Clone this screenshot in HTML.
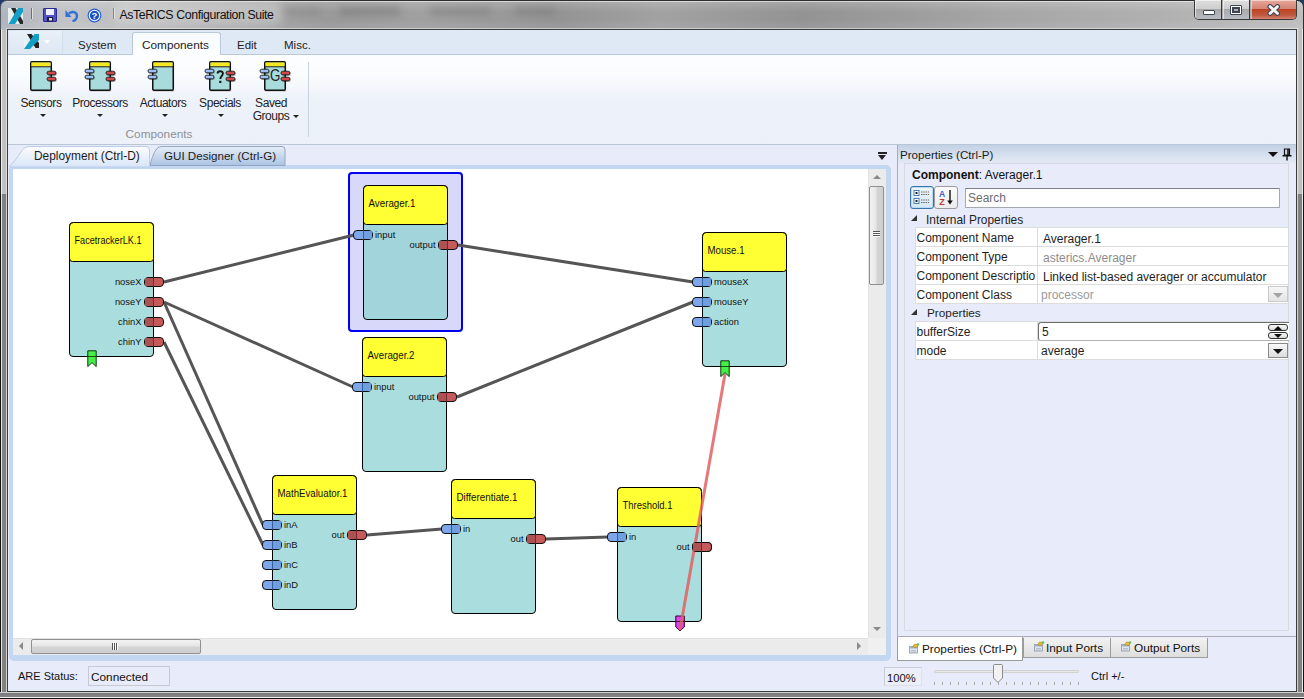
<!DOCTYPE html>
<html><head><meta charset="utf-8">
<style>
*{margin:0;padding:0;box-sizing:border-box}
html,body{width:1304px;height:699px;overflow:hidden;background:#1d3a68}
body{position:relative;font-family:"Liberation Sans",sans-serif;font-size:12px;color:#1e1e1e}
.a{position:absolute}
.t{position:absolute;white-space:nowrap;line-height:1}
#frame{left:0;top:0;width:1304px;height:699px;border-radius:7px 7px 0 0;
 background:linear-gradient(90deg,#bdbdbd 0px,#c6c6c6 60px,#ababab 220px,#999 330px,#a0a0a0 420px,#949494 560px,#a2a2a2 660px,#939393 800px,#a6a6a6 1000px,#b0b0b0 1150px,#bebebe 1304px);
 border:1px solid #2e2e2e}
#content{left:7px;top:29px;width:1290px;height:663px;border:1px solid #3c3c3c;background:#e8ebf9}
.tab{position:absolute;top:38px;font-size:12px;color:#222}
.rl{position:absolute;font-size:12px;color:#222;text-align:center;white-space:nowrap;line-height:13px}
.dd{position:absolute;width:0;height:0;border-left:2.5px solid transparent;border-right:2.5px solid transparent;border-top:3px solid #222}
.grid{position:absolute;left:915px;width:373px;background:#fff}
.row{position:absolute;left:0;width:373px;height:19px;border-bottom:1px solid #dcdcdc}
.row .k{position:absolute;left:0.5px;top:3px;font-size:12px;color:#1e1e1e;white-space:nowrap;overflow:hidden;width:118px}
.row .v{position:absolute;left:127px;top:4px;font-size:12px;color:#1e1e1e;white-space:nowrap}
.row .sep{position:absolute;left:121px;top:0;width:1px;height:19px;background:#dcdcdc}
</style></head><body>
<div id="frame" class="a"></div>
<div class="a" style="left:0;top:194px;width:7px;height:505px;background:linear-gradient(90deg,#111 0,#111 1px,#e4e4e4 1px,#e4e4e4 2px,#828282 2px,#808080 6px,#d2d2d2 6px)"></div>
<div class="a" style="left:0;top:29px;width:7px;height:165px;background:linear-gradient(90deg,#222 0,#222 1px,#ececec 1px,#ececec 2px,#c4c4c4 2px,#bdbdbd 6px,#e0e0e0 6px)"></div>
<div class="a" style="left:1297px;top:194px;width:7px;height:505px;background:linear-gradient(90deg,#cfcfcf 0,#cfcfcf 1px,#828282 1px,#808080 5px,#ececec 5px,#ececec 6px,#111 6px)"></div>
<div class="a" style="left:1297px;top:29px;width:7px;height:165px;background:linear-gradient(90deg,#e0e0e0 0,#e0e0e0 1px,#c4c4c4 1px,#bdbdbd 5px,#ececec 5px,#ececec 6px,#222 6px)"></div>
<div class="a" style="left:0;top:692px;width:1304px;height:7px;background:linear-gradient(180deg,#d0d0d0 0,#d0d0d0 1px,#7a7a7a 1px,#868686 5px,#efefef 5px,#efefef 6px,#111 6px)"></div>

<!-- title bar -->
<!-- glass highlights -->
<div class="a" style="left:6px;top:1px;width:1292px;height:1px;background:rgba(255,255,255,0.55)"></div>
<div class="a" style="left:6px;top:28px;width:1292px;height:1px;background:rgba(255,255,255,0.45)"></div>
<div class="a" style="left:1px;top:1px;width:1302px;height:28px;border-radius:6px 6px 0 0;background:linear-gradient(180deg,rgba(255,255,255,0.18),rgba(255,255,255,0) 40%,rgba(0,0,0,0) 70%,rgba(255,255,255,0.08))"></div>
<div class="a" style="left:0;top:0;width:160px;height:30px;border-radius:7px 0 0 0;background:linear-gradient(90deg,rgba(150,165,190,0.35),rgba(190,195,205,0.2) 50%,rgba(0,0,0,0))"></div>
<div class="a" style="left:280px;top:6px;width:40px;height:10px;background:#777;opacity:.25;filter:blur(3px)"></div>
<div class="a" style="left:340px;top:6px;width:60px;height:10px;background:#666;opacity:.3;filter:blur(3px)"></div>
<div class="a" style="left:430px;top:6px;width:60px;height:10px;background:#666;opacity:.25;filter:blur(3px)"></div>
<div class="a" style="left:515px;top:6px;width:40px;height:10px;background:#666;opacity:.25;filter:blur(3px)"></div>
<!-- title icons -->
<svg class="a" style="left:8px;top:8px" width="16" height="16" viewBox="0 0 16 16">
 <rect x="0" y="0" width="15" height="16" fill="#e9eef0"/>
 <path d="M3,0 H7.5 L15,13 V16 H12 L3,0Z" fill="#2a2a2a"/>
 <path d="M10,0 H15 V4 L7,16 H0.5 Z" fill="#139fc8"/>
</svg>
<div class="a" style="left:31px;top:8px;width:2px;height:11px;background:linear-gradient(90deg,#6e6e6e 50%,#e0e0e0 50%)"></div>
<svg class="a" style="left:43px;top:8px" width="14" height="14" viewBox="0 0 14 14">
 <rect x="0.5" y="0.5" width="13" height="13" rx="0.5" fill="#5050c8" stroke="#2a2a90"/>
 <rect x="3" y="1" width="8" height="6" fill="#f0f0f8"/>
 <rect x="4" y="9" width="6" height="4.5" fill="#1a1a3a"/>
 <rect x="6" y="10" width="3" height="2.5" fill="#e8e8f0"/>
</svg>
<svg class="a" style="left:65px;top:9px" width="14" height="13" viewBox="0 0 14 13">
 <path d="M4,4.5 C7,2 12,2.5 12,7 C12,10 9.5,12 7.5,12" fill="none" stroke="#3070d8" stroke-width="2.4"/>
 <path d="M0.5,1 L0.5,8 L6.5,8 Z" fill="#3070d8"/>
</svg>
<svg class="a" style="left:87px;top:8px" width="15" height="15" viewBox="0 0 15 15">
 <circle cx="7.5" cy="7.5" r="6.9" fill="#2a5ed8"/>
 <circle cx="7.5" cy="7.5" r="5.2" fill="#1650c8" stroke="#fff" stroke-width="1.1"/>
 <text x="7.5" y="11.3" font-size="9.5" font-weight="bold" text-anchor="middle" fill="#fff" font-family="Liberation Sans">?</text>
</svg>
<div class="a" style="left:113px;top:8px;width:2px;height:11px;background:linear-gradient(90deg,#6e6e6e 50%,#e0e0e0 50%)"></div>
<!-- caption buttons -->
<div class="a" style="left:1194px;top:0;width:103px;height:20px;border:1px solid #3a3a3a;border-top:none;border-radius:0 0 5px 5px;overflow:hidden;background:#aaa">
 <div class="a" style="left:0;top:0;width:27px;height:19px;background:linear-gradient(#dedede,#cfcfcf 45%,#a9a9a9 50%,#b8bcc4);border-right:1px solid #3a3a3a;box-shadow:inset 1px 1px 0 rgba(255,255,255,.6)"></div>
 <div class="a" style="left:28px;top:0;width:27px;height:19px;background:linear-gradient(#dedede,#cfcfcf 45%,#a9a9a9 50%,#b8bcc4);border-right:1px solid #3a3a3a;box-shadow:inset 1px 1px 0 rgba(255,255,255,.6)"></div>
 <div class="a" style="left:56px;top:0;width:46px;height:19px;background:linear-gradient(#e8a89c,#d48474 45%,#c04424 50%,#bf5a42 80%,#d9826e);box-shadow:inset 1px 1px 0 rgba(255,255,255,.5),inset -1px 0 0 rgba(255,255,255,.3)"></div>
</div>
<div class="a" style="left:1203px;top:10px;width:12px;height:5px;background:#fff;border:1px solid #3d4454;border-radius:1px"></div>
<div class="a" style="left:1230px;top:5px;width:12px;height:10px;background:transparent;border:1px solid #3d4454;border-radius:1px;box-shadow:inset 0 0 0 1px #fff, inset 0 0 0 3px #3d4454"></div>
<svg class="a" style="left:1266px;top:4px" width="16" height="12" viewBox="0 0 16 12">
 <path d="M4,2.6 L11.5,9.4 M11.5,2.6 L4,9.4" stroke="#3d4454" stroke-width="5" stroke-linecap="round"/>
 <path d="M4,2.6 L11.5,9.4 M11.5,2.6 L4,9.4" stroke="#f4f4f4" stroke-width="2.8" stroke-linecap="round"/>
</svg>

<div class="a" style="left:112px;top:3px;width:172px;height:22px;border-radius:11px;background:rgba(235,235,235,0.35);filter:blur(4px)"></div>
<div class="t" style="left:119.5px;top:8.5px;font-size:12.3px;letter-spacing:-0.38px;color:#111">AsTeRICS Configuration Suite</div>

<div id="content" class="a"></div>
<!-- ribbon tab row -->
<div class="a" style="left:8px;top:30px;width:1288px;height:25px;background:#dfe9f5;border-bottom:1px solid #b9c9dd"></div>
<!-- ribbon panel -->
<div class="a" style="left:8px;top:55px;width:1288px;height:90px;background:linear-gradient(#fdfeff 0,#fbfcfe 20px,#eef3fa 42px,#ebf0f9 100%);border-bottom:1px solid #b8c6d8"></div>

<!-- app button -->
<div class="a" style="left:9px;top:31px;width:54px;height:22px;background:linear-gradient(#e9f0f9,#dde7f3);border-right:1px solid #d3deeb"></div>
<svg class="a" style="left:0;top:0" width="64" height="56" viewBox="0 0 64 56">
 <path d="M24,39 L29,44 L24,49Z" fill="#eef2f5"/>
 <path d="M27,34 H31.5 L39,43 V48 H35.5 Z" fill="#222"/>
 <path d="M34.5,34 H39 V40 L30,49 H24 Z" fill="#139ec8"/>
</svg>
<div class="dd" style="left:43.5px;top:40px;border-top-color:#fbfcfe;border-left-width:3.5px;border-right-width:3.5px;border-top-width:4px"></div>
<!-- tabs -->
<div class="t tab" style="left:78px;top:39.5px;font-size:11.5px">System</div>
<div class="a" style="left:132px;top:32px;width:89px;height:23px;border:1px solid #b9c8da;border-bottom:none;border-radius:3px 3px 0 0;background:linear-gradient(#f7fafd,#fdfeff)"></div>
<div class="t tab" style="left:142px;top:39.5px;font-size:11.8px">Components</div>
<div class="t tab" style="left:237px;top:39.5px;font-size:11.5px">Edit</div>
<div class="t tab" style="left:284px;top:39.5px;font-size:11.5px">Misc.</div>
<!-- ribbon icons -->
<svg class="a" style="left:0;top:55px" width="320" height="45" viewBox="0 55 320 45">
 
 <g transform="translate(30,61)">
   <rect x="1.2" y="1.5" width="21" height="29" rx="1" fill="#000" opacity="0.22"/>
   <rect x="0.75" y="0.75" width="20.5" height="28.5" rx="1.2" fill="#a8dcdc" stroke="#111" stroke-width="1.5"/>
   <path d="M1.5,5.5 V1.5 H20.5 V5.5Z" fill="#f8e81e"/>
   <line x1="1" y1="5.8" x2="21" y2="5.8" stroke="#222" stroke-width="1"/>
  </g>
 <g transform="translate(47,71.2)">
   <rect x="0.8" y="0.8" width="9" height="4" rx="2" fill="#000" opacity=".3"/>
   <rect x="0" y="0" width="9" height="3.6" rx="1.8" fill="#cf4a48" stroke="#1a1a1a" stroke-width="0.9"/>
  </g><g transform="translate(47,77.2)">
   <rect x="0.8" y="0.8" width="9" height="4" rx="2" fill="#000" opacity=".3"/>
   <rect x="0" y="0" width="9" height="3.6" rx="1.8" fill="#cf4a48" stroke="#1a1a1a" stroke-width="0.9"/>
  </g>
 <g transform="translate(89,61)">
   <rect x="1.2" y="1.5" width="21" height="29" rx="1" fill="#000" opacity="0.22"/>
   <rect x="0.75" y="0.75" width="20.5" height="28.5" rx="1.2" fill="#a8dcdc" stroke="#111" stroke-width="1.5"/>
   <path d="M1.5,5.5 V1.5 H20.5 V5.5Z" fill="#f8e81e"/>
   <line x1="1" y1="5.8" x2="21" y2="5.8" stroke="#222" stroke-width="1"/>
  </g>
 <g transform="translate(85,69.2)">
   <rect x="0.8" y="0.8" width="9" height="4" rx="2" fill="#000" opacity=".3"/>
   <rect x="0" y="0" width="9" height="3.6" rx="1.8" fill="#9ec0f4" stroke="#1a1a1a" stroke-width="0.9"/>
  </g><g transform="translate(85,75.2)">
   <rect x="0.8" y="0.8" width="9" height="4" rx="2" fill="#000" opacity=".3"/>
   <rect x="0" y="0" width="9" height="3.6" rx="1.8" fill="#9ec0f4" stroke="#1a1a1a" stroke-width="0.9"/>
  </g>
 <g transform="translate(106,71.2)">
   <rect x="0.8" y="0.8" width="9" height="4" rx="2" fill="#000" opacity=".3"/>
   <rect x="0" y="0" width="9" height="3.6" rx="1.8" fill="#cf4a48" stroke="#1a1a1a" stroke-width="0.9"/>
  </g><g transform="translate(106,77.2)">
   <rect x="0.8" y="0.8" width="9" height="4" rx="2" fill="#000" opacity=".3"/>
   <rect x="0" y="0" width="9" height="3.6" rx="1.8" fill="#cf4a48" stroke="#1a1a1a" stroke-width="0.9"/>
  </g>
 <g transform="translate(152,61)">
   <rect x="1.2" y="1.5" width="21" height="29" rx="1" fill="#000" opacity="0.22"/>
   <rect x="0.75" y="0.75" width="20.5" height="28.5" rx="1.2" fill="#a8dcdc" stroke="#111" stroke-width="1.5"/>
   <path d="M1.5,5.5 V1.5 H20.5 V5.5Z" fill="#f8e81e"/>
   <line x1="1" y1="5.8" x2="21" y2="5.8" stroke="#222" stroke-width="1"/>
  </g>
 <g transform="translate(148,69.2)">
   <rect x="0.8" y="0.8" width="9" height="4" rx="2" fill="#000" opacity=".3"/>
   <rect x="0" y="0" width="9" height="3.6" rx="1.8" fill="#9ec0f4" stroke="#1a1a1a" stroke-width="0.9"/>
  </g><g transform="translate(148,75.2)">
   <rect x="0.8" y="0.8" width="9" height="4" rx="2" fill="#000" opacity=".3"/>
   <rect x="0" y="0" width="9" height="3.6" rx="1.8" fill="#9ec0f4" stroke="#1a1a1a" stroke-width="0.9"/>
  </g>
 <g transform="translate(209,61)">
   <rect x="1.2" y="1.5" width="21" height="29" rx="1" fill="#000" opacity="0.22"/>
   <rect x="0.75" y="0.75" width="20.5" height="28.5" rx="1.2" fill="#a8dcdc" stroke="#111" stroke-width="1.5"/>
   <path d="M1.5,5.5 V1.5 H20.5 V5.5Z" fill="#f8e81e"/>
   <line x1="1" y1="5.8" x2="21" y2="5.8" stroke="#222" stroke-width="1"/>
  </g>
 <g transform="translate(205,69.2)">
   <rect x="0.8" y="0.8" width="9" height="4" rx="2" fill="#000" opacity=".3"/>
   <rect x="0" y="0" width="9" height="3.6" rx="1.8" fill="#9ec0f4" stroke="#1a1a1a" stroke-width="0.9"/>
  </g><g transform="translate(205,75.2)">
   <rect x="0.8" y="0.8" width="9" height="4" rx="2" fill="#000" opacity=".3"/>
   <rect x="0" y="0" width="9" height="3.6" rx="1.8" fill="#9ec0f4" stroke="#1a1a1a" stroke-width="0.9"/>
  </g>
 <g transform="translate(226,71.2)">
   <rect x="0.8" y="0.8" width="9" height="4" rx="2" fill="#000" opacity=".3"/>
   <rect x="0" y="0" width="9" height="3.6" rx="1.8" fill="#cf4a48" stroke="#1a1a1a" stroke-width="0.9"/>
  </g><g transform="translate(226,77.2)">
   <rect x="0.8" y="0.8" width="9" height="4" rx="2" fill="#000" opacity=".3"/>
   <rect x="0" y="0" width="9" height="3.6" rx="1.8" fill="#cf4a48" stroke="#1a1a1a" stroke-width="0.9"/>
  </g>
 <path d="M217.6,73.6 C217.6,70.6 222.9,70.4 222.9,73.6 C222.9,76 220.3,76.2 220.3,79" fill="none" stroke="#151515" stroke-width="1.9"/><rect x="219.2" y="80.8" width="2.2" height="2.2" fill="#151515"/>
 <g transform="translate(264,61)">
   <rect x="1.2" y="1.5" width="21" height="29" rx="1" fill="#000" opacity="0.22"/>
   <rect x="0.75" y="0.75" width="20.5" height="28.5" rx="1.2" fill="#a8dcdc" stroke="#111" stroke-width="1.5"/>
   <path d="M1.5,5.5 V1.5 H20.5 V5.5Z" fill="#f8e81e"/>
   <line x1="1" y1="5.8" x2="21" y2="5.8" stroke="#222" stroke-width="1"/>
  </g>
 <g transform="translate(260,69.2)">
   <rect x="0.8" y="0.8" width="9" height="4" rx="2" fill="#000" opacity=".3"/>
   <rect x="0" y="0" width="9" height="3.6" rx="1.8" fill="#9ec0f4" stroke="#1a1a1a" stroke-width="0.9"/>
  </g><g transform="translate(260,75.2)">
   <rect x="0.8" y="0.8" width="9" height="4" rx="2" fill="#000" opacity=".3"/>
   <rect x="0" y="0" width="9" height="3.6" rx="1.8" fill="#9ec0f4" stroke="#1a1a1a" stroke-width="0.9"/>
  </g>
 <g transform="translate(281,71.2)">
   <rect x="0.8" y="0.8" width="9" height="4" rx="2" fill="#000" opacity=".3"/>
   <rect x="0" y="0" width="9" height="3.6" rx="1.8" fill="#cf4a48" stroke="#1a1a1a" stroke-width="0.9"/>
  </g><g transform="translate(281,77.2)">
   <rect x="0.8" y="0.8" width="9" height="4" rx="2" fill="#000" opacity=".3"/>
   <rect x="0" y="0" width="9" height="3.6" rx="1.8" fill="#cf4a48" stroke="#1a1a1a" stroke-width="0.9"/>
  </g>
 <text x="270" y="80.8" font-size="16" textLength="10.4" lengthAdjust="spacingAndGlyphs" fill="#222" font-family="Liberation Sans">G</text>
</svg>
<div class="rl" style="left:11px;top:96.5px;width:60px;font-size:12px;letter-spacing:-0.45px">Sensors</div>
<div class="rl" style="left:70px;top:96.5px;width:60px;font-size:12px;letter-spacing:-0.45px">Processors</div>
<div class="rl" style="left:133px;top:96.5px;width:60px;font-size:12px;letter-spacing:-0.45px">Actuators</div>
<div class="rl" style="left:190px;top:96.5px;width:60px;font-size:12px;letter-spacing:-0.45px">Specials</div>
<div class="rl" style="left:241px;top:96.5px;width:60px;font-size:12px;letter-spacing:-0.45px">Saved<br>Groups</div>
<div class="dd" style="left:39.5px;top:113.5px;border-left-width:3px;border-right-width:3px;border-top-width:3.5px"></div>
<div class="dd" style="left:97px;top:113.5px;border-left-width:3px;border-right-width:3px;border-top-width:3.5px"></div>
<div class="dd" style="left:161.5px;top:113.5px;border-left-width:3px;border-right-width:3px;border-top-width:3.5px"></div>
<div class="dd" style="left:217.5px;top:113.5px;border-left-width:3px;border-right-width:3px;border-top-width:3.5px"></div>
<div class="dd" style="left:293px;top:114.5px;border-left-width:3px;border-right-width:3px;border-top-width:3.5px"></div>
<div class="rl" style="left:119px;top:128px;width:80px;font-size:11.8px;color:#8e9196">Components</div>
<div class="a" style="left:308px;top:62px;width:1px;height:75px;background:#c9d3e0"></div>

<!-- canvas frame -->
<div class="a" style="left:9px;top:165px;width:882px;height:496px;border:4px solid #c4d7f2;border-right-width:5px;border-bottom-width:6px;border-radius:5px;background:#fff"></div>
<!-- doc tabs -->
<svg class="a" style="left:0;top:140px" width="300" height="30" viewBox="0 140 300 30">
 <defs>
  <linearGradient id="dt1" x1="0" y1="0" x2="0" y2="1"><stop offset="0" stop-color="#fbfcfe"/><stop offset="1" stop-color="#d9e6f8"/></linearGradient>
  <linearGradient id="dt2" x1="0" y1="0" x2="0" y2="1"><stop offset="0" stop-color="#e6edf7"/><stop offset="0.45" stop-color="#ccdaee"/><stop offset="1" stop-color="#abc4e3"/></linearGradient>
 </defs>
 <path d="M150,165.5 C151.5,160 153,153 157,148.5 Q158.5,146.5 162,146.5 H282 Q285,146.5 285,149.5 V165.5 Z" fill="url(#dt2)" stroke="#93a6c0" stroke-width="1"/>
 <path d="M9.5,166 C14,162 17,158 21,152 Q24,146.5 30,146.5 H146 Q149.5,146.5 149.5,150 V167 H9.5Z" fill="url(#dt1)" stroke="#b9cdea" stroke-width="1"/>
</svg>
<div class="t" style="left:34px;top:151px;font-size:11.9px;color:#1b1b1b">Deployment (Ctrl-D)</div>
<div class="t" style="left:164px;top:150px;font-size:11.6px;color:#1b1b1b">GUI Designer (Ctrl-G)</div>
<!-- doc dropdown icon -->
<div class="a" style="left:878px;top:152px;width:9px;height:2px;background:#222"></div>
<div class="dd" style="left:878px;top:155px;border-left-width:4.5px;border-right-width:4.5px;border-top-width:5px"></div>

<svg class="a" style="left:13px;top:169px" width="855" height="469" viewBox="13 169 855 469" font-family="Liberation Sans, sans-serif"><rect x="349" y="173" width="113" height="158" rx="3" fill="#d8d8fa" stroke="#0000f0" stroke-width="2"/>
<line x1="164" y1="282" x2="354" y2="235" stroke="#555555" stroke-width="3"/>
<line x1="164" y1="302" x2="353" y2="387" stroke="#555555" stroke-width="3"/>
<line x1="164" y1="302" x2="263" y2="525" stroke="#555555" stroke-width="3"/>
<line x1="164" y1="342" x2="263" y2="545" stroke="#555555" stroke-width="3"/>
<line x1="458" y1="245" x2="693" y2="282" stroke="#555555" stroke-width="3"/>
<line x1="457" y1="397" x2="693" y2="302" stroke="#555555" stroke-width="3"/>
<line x1="367" y1="535" x2="442" y2="529" stroke="#555555" stroke-width="3"/>
<line x1="546" y1="539" x2="608" y2="537" stroke="#555555" stroke-width="3"/>
<rect x="69.5" y="222.5" width="84" height="134" rx="3.5" fill="#aadede" stroke="#000"/>
<path d="M69.5,261.5 V226.5 a4,4 0 0 1 4,-4 H149.5 a4,4 0 0 1 4,4 V258.5 a3,3 0 0 1 -3,3 H72.5 a3,3 0 0 1 -3,-3 Z" fill="#ffff33" stroke="#000"/>
<text x="74.5" y="244.2" font-size="10.1" textLength="67" lengthAdjust="spacingAndGlyphs" fill="#111">FacetrackerLK.1</text>
<rect x="144.5" y="277.5" width="19" height="9" rx="3.5" fill="#c65a5a" stroke="#111"/>
<rect x="145.0" y="278" width="8.5" height="8" fill="#ad5252"/>
<line x1="153.5" y1="277.5" x2="153.5" y2="286.5" stroke="#7a2a2a" stroke-width="1"/>
<text x="141.5" y="284.8" font-size="9.4" text-anchor="end" fill="#111">noseX</text>
<rect x="144.5" y="297.5" width="19" height="9" rx="3.5" fill="#c65a5a" stroke="#111"/>
<rect x="145.0" y="298" width="8.5" height="8" fill="#ad5252"/>
<line x1="153.5" y1="297.5" x2="153.5" y2="306.5" stroke="#7a2a2a" stroke-width="1"/>
<text x="141.5" y="304.8" font-size="9.4" text-anchor="end" fill="#111">noseY</text>
<rect x="144.5" y="317.5" width="19" height="9" rx="3.5" fill="#c65a5a" stroke="#111"/>
<rect x="145.0" y="318" width="8.5" height="8" fill="#ad5252"/>
<line x1="153.5" y1="317.5" x2="153.5" y2="326.5" stroke="#7a2a2a" stroke-width="1"/>
<text x="141.5" y="324.8" font-size="9.4" text-anchor="end" fill="#111">chinX</text>
<rect x="144.5" y="337.5" width="19" height="9" rx="3.5" fill="#c65a5a" stroke="#111"/>
<rect x="145.0" y="338" width="8.5" height="8" fill="#ad5252"/>
<line x1="153.5" y1="337.5" x2="153.5" y2="346.5" stroke="#7a2a2a" stroke-width="1"/>
<text x="141.5" y="344.8" font-size="9.4" text-anchor="end" fill="#111">chinY</text>
<rect x="363.5" y="185.5" width="84" height="134" rx="3.5" fill="#a2d4dc" stroke="#000"/>
<path d="M363.5,224.5 V189.5 a4,4 0 0 1 4,-4 H443.5 a4,4 0 0 1 4,4 V221.5 a3,3 0 0 1 -3,3 H366.5 a3,3 0 0 1 -3,-3 Z" fill="#ffff33" stroke="#000"/>
<text x="368.5" y="207.2" font-size="10.1" textLength="47" lengthAdjust="spacingAndGlyphs" fill="#111">Averager.1</text>
<rect x="353.5" y="230.5" width="19" height="9" rx="3.5" fill="#7ea6ea" stroke="#111"/>
<rect x="364" y="231" width="8.0" height="8" rx="0" fill="#6e9ede" opacity="0.9"/>
<line x1="363.5" y1="230.5" x2="363.5" y2="239.5" stroke="#35609a" stroke-width="1"/>
<text x="375" y="237.8" font-size="9.4" fill="#111">input</text>
<rect x="438.5" y="240.5" width="19" height="9" rx="3.5" fill="#c65a5a" stroke="#111"/>
<rect x="439.0" y="241" width="8.5" height="8" fill="#ad5252"/>
<line x1="447.5" y1="240.5" x2="447.5" y2="249.5" stroke="#7a2a2a" stroke-width="1"/>
<text x="435.5" y="247.8" font-size="9.4" text-anchor="end" fill="#111">output</text>
<rect x="362.5" y="337.5" width="84" height="134" rx="3.5" fill="#aadede" stroke="#000"/>
<path d="M362.5,376.5 V341.5 a4,4 0 0 1 4,-4 H442.5 a4,4 0 0 1 4,4 V373.5 a3,3 0 0 1 -3,3 H365.5 a3,3 0 0 1 -3,-3 Z" fill="#ffff33" stroke="#000"/>
<text x="367.5" y="359.2" font-size="10.1" textLength="47" lengthAdjust="spacingAndGlyphs" fill="#111">Averager.2</text>
<rect x="352.5" y="382.5" width="19" height="9" rx="3.5" fill="#7ea6ea" stroke="#111"/>
<rect x="363" y="383" width="8.0" height="8" rx="0" fill="#6e9ede" opacity="0.9"/>
<line x1="362.5" y1="382.5" x2="362.5" y2="391.5" stroke="#35609a" stroke-width="1"/>
<text x="374" y="389.8" font-size="9.4" fill="#111">input</text>
<rect x="437.5" y="392.5" width="19" height="9" rx="3.5" fill="#c65a5a" stroke="#111"/>
<rect x="438.0" y="393" width="8.5" height="8" fill="#ad5252"/>
<line x1="446.5" y1="392.5" x2="446.5" y2="401.5" stroke="#7a2a2a" stroke-width="1"/>
<text x="434.5" y="399.8" font-size="9.4" text-anchor="end" fill="#111">output</text>
<rect x="702.5" y="232.5" width="84" height="134" rx="3.5" fill="#aadede" stroke="#000"/>
<path d="M702.5,271.5 V236.5 a4,4 0 0 1 4,-4 H782.5 a4,4 0 0 1 4,4 V268.5 a3,3 0 0 1 -3,3 H705.5 a3,3 0 0 1 -3,-3 Z" fill="#ffff33" stroke="#000"/>
<text x="707.5" y="254.2" font-size="10.1" textLength="37" lengthAdjust="spacingAndGlyphs" fill="#111">Mouse.1</text>
<rect x="692.5" y="277.5" width="19" height="9" rx="3.5" fill="#7ea6ea" stroke="#111"/>
<rect x="703" y="278" width="8.0" height="8" rx="0" fill="#6e9ede" opacity="0.9"/>
<line x1="702.5" y1="277.5" x2="702.5" y2="286.5" stroke="#35609a" stroke-width="1"/>
<text x="714" y="284.8" font-size="9.4" fill="#111">mouseX</text>
<rect x="692.5" y="297.5" width="19" height="9" rx="3.5" fill="#7ea6ea" stroke="#111"/>
<rect x="703" y="298" width="8.0" height="8" rx="0" fill="#6e9ede" opacity="0.9"/>
<line x1="702.5" y1="297.5" x2="702.5" y2="306.5" stroke="#35609a" stroke-width="1"/>
<text x="714" y="304.8" font-size="9.4" fill="#111">mouseY</text>
<rect x="692.5" y="317.5" width="19" height="9" rx="3.5" fill="#7ea6ea" stroke="#111"/>
<rect x="703" y="318" width="8.0" height="8" rx="0" fill="#6e9ede" opacity="0.9"/>
<line x1="702.5" y1="317.5" x2="702.5" y2="326.5" stroke="#35609a" stroke-width="1"/>
<text x="714" y="324.8" font-size="9.4" fill="#111">action</text>
<rect x="272.5" y="475.5" width="84" height="134" rx="3.5" fill="#aadede" stroke="#000"/>
<path d="M272.5,514.5 V479.5 a4,4 0 0 1 4,-4 H352.5 a4,4 0 0 1 4,4 V511.5 a3,3 0 0 1 -3,3 H275.5 a3,3 0 0 1 -3,-3 Z" fill="#ffff33" stroke="#000"/>
<text x="277.5" y="497.2" font-size="10.1" textLength="70" lengthAdjust="spacingAndGlyphs" fill="#111">MathEvaluator.1</text>
<rect x="262.5" y="520.5" width="19" height="9" rx="3.5" fill="#7ea6ea" stroke="#111"/>
<rect x="273" y="521" width="8.0" height="8" rx="0" fill="#6e9ede" opacity="0.9"/>
<line x1="272.5" y1="520.5" x2="272.5" y2="529.5" stroke="#35609a" stroke-width="1"/>
<text x="284" y="527.8" font-size="9.4" fill="#111">inA</text>
<rect x="262.5" y="540.5" width="19" height="9" rx="3.5" fill="#7ea6ea" stroke="#111"/>
<rect x="273" y="541" width="8.0" height="8" rx="0" fill="#6e9ede" opacity="0.9"/>
<line x1="272.5" y1="540.5" x2="272.5" y2="549.5" stroke="#35609a" stroke-width="1"/>
<text x="284" y="547.8" font-size="9.4" fill="#111">inB</text>
<rect x="262.5" y="560.5" width="19" height="9" rx="3.5" fill="#7ea6ea" stroke="#111"/>
<rect x="273" y="561" width="8.0" height="8" rx="0" fill="#6e9ede" opacity="0.9"/>
<line x1="272.5" y1="560.5" x2="272.5" y2="569.5" stroke="#35609a" stroke-width="1"/>
<text x="284" y="567.8" font-size="9.4" fill="#111">inC</text>
<rect x="262.5" y="580.5" width="19" height="9" rx="3.5" fill="#7ea6ea" stroke="#111"/>
<rect x="273" y="581" width="8.0" height="8" rx="0" fill="#6e9ede" opacity="0.9"/>
<line x1="272.5" y1="580.5" x2="272.5" y2="589.5" stroke="#35609a" stroke-width="1"/>
<text x="284" y="587.8" font-size="9.4" fill="#111">inD</text>
<rect x="347.5" y="530.5" width="19" height="9" rx="3.5" fill="#c65a5a" stroke="#111"/>
<rect x="348.0" y="531" width="8.5" height="8" fill="#ad5252"/>
<line x1="356.5" y1="530.5" x2="356.5" y2="539.5" stroke="#7a2a2a" stroke-width="1"/>
<text x="344.5" y="537.8" font-size="9.4" text-anchor="end" fill="#111">out</text>
<rect x="451.5" y="479.5" width="84" height="134" rx="3.5" fill="#aadede" stroke="#000"/>
<path d="M451.5,518.5 V483.5 a4,4 0 0 1 4,-4 H531.5 a4,4 0 0 1 4,4 V515.5 a3,3 0 0 1 -3,3 H454.5 a3,3 0 0 1 -3,-3 Z" fill="#ffff33" stroke="#000"/>
<text x="456.5" y="501.2" font-size="10.1" textLength="61" lengthAdjust="spacingAndGlyphs" fill="#111">Differentiate.1</text>
<rect x="441.5" y="524.5" width="19" height="9" rx="3.5" fill="#7ea6ea" stroke="#111"/>
<rect x="452" y="525" width="8.0" height="8" rx="0" fill="#6e9ede" opacity="0.9"/>
<line x1="451.5" y1="524.5" x2="451.5" y2="533.5" stroke="#35609a" stroke-width="1"/>
<text x="463" y="531.8" font-size="9.4" fill="#111">in</text>
<rect x="526.5" y="534.5" width="19" height="9" rx="3.5" fill="#c65a5a" stroke="#111"/>
<rect x="527.0" y="535" width="8.5" height="8" fill="#ad5252"/>
<line x1="535.5" y1="534.5" x2="535.5" y2="543.5" stroke="#7a2a2a" stroke-width="1"/>
<text x="523.5" y="541.8" font-size="9.4" text-anchor="end" fill="#111">out</text>
<rect x="617.5" y="487.5" width="84" height="134" rx="3.5" fill="#aadede" stroke="#000"/>
<path d="M617.5,526.5 V491.5 a4,4 0 0 1 4,-4 H697.5 a4,4 0 0 1 4,4 V523.5 a3,3 0 0 1 -3,3 H620.5 a3,3 0 0 1 -3,-3 Z" fill="#ffff33" stroke="#000"/>
<text x="622.5" y="509.2" font-size="10.1" textLength="50" lengthAdjust="spacingAndGlyphs" fill="#111">Threshold.1</text>
<rect x="607.5" y="532.5" width="19" height="9" rx="3.5" fill="#7ea6ea" stroke="#111"/>
<rect x="618" y="533" width="8.0" height="8" rx="0" fill="#6e9ede" opacity="0.9"/>
<line x1="617.5" y1="532.5" x2="617.5" y2="541.5" stroke="#35609a" stroke-width="1"/>
<text x="629" y="539.8" font-size="9.4" fill="#111">in</text>
<rect x="692.5" y="542.5" width="19" height="9" rx="3.5" fill="#c65a5a" stroke="#111"/>
<rect x="693.0" y="543" width="8.5" height="8" fill="#ad5252"/>
<line x1="701.5" y1="542.5" x2="701.5" y2="551.5" stroke="#7a2a2a" stroke-width="1"/>
<text x="689.5" y="549.8" font-size="9.4" text-anchor="end" fill="#111">out</text>
<path d="M675.8,616 H684.3 V627 L680,630.8 L675.8,627 Z" fill="#dd44ee" stroke="#330033" stroke-width="1"/>
<line x1="675.8" y1="621.5" x2="684.3" y2="621.5" stroke="#220022" stroke-opacity="0.8"/>
<line x1="680" y1="630" x2="725" y2="374" stroke="#e06262" stroke-opacity="0.85" stroke-width="3"/>
<rect x="692.5" y="542.5" width="19" height="9" rx="3.5" fill="#c65a5a" stroke="#111"/>
<rect x="693.0" y="543" width="8.5" height="8" fill="#ad5252"/>
<line x1="701.5" y1="542.5" x2="701.5" y2="551.5" stroke="#7a2a2a" stroke-width="1"/>
<path d="M87.8,350.8 H96.2 V366.6 L92,362.6 L87.8,366.6 Z" fill="#44f044" stroke="#113311" stroke-width="1"/><line x1="87.8" y1="356.5" x2="96.2" y2="356.5" stroke="#0a2a0a" stroke-opacity="0.8" stroke-width="1"/>
<path d="M720.8,360.8 H729.2 V376.6 L725,372.6 L720.8,376.6 Z" fill="#44f044" stroke="#113311" stroke-width="1"/><line x1="720.8" y1="366.5" x2="729.2" y2="366.5" stroke="#0a2a0a" stroke-opacity="0.8" stroke-width="1"/></svg>
<!-- vertical scrollbar -->
<div class="a" style="left:868px;top:169px;width:18px;height:469px;background:#ebebeb;border-left:1px solid #e2e2e2"></div>
<div class="dd" style="left:873px;top:175px;border-top:none;border-bottom:4px solid #8a8a8a;border-left-width:4px;border-right-width:4px"></div>
<div class="a" style="left:869px;top:186px;width:15px;height:99px;border:1px solid #8e8f8f;border-radius:2px;background:linear-gradient(90deg,#f3f3f3,#e6e6e6 45%,#d4d4d4 55%,#cfcfcf)"></div>
<div class="a" style="left:873px;top:231px;width:7px;height:1px;background:#555;box-shadow:0 2px 0 #555,0 4px 0 #555,0 1px 0 #fff,0 3px 0 #fff,0 5px 0 #fff"></div>
<div class="dd" style="left:873px;top:627px;border-top:4px solid #8a8a8a;border-left-width:4px;border-right-width:4px"></div>
<!-- horizontal scrollbar -->
<div class="a" style="left:13px;top:638px;width:855px;height:17px;background:#ebebeb;border-top:1px solid #e2e2e2"></div>
<div class="a" style="left:868px;top:638px;width:18px;height:17px;background:#f0f0f0"></div>
<div class="a" style="left:19px;top:642px;width:0;height:0;border-top:4px solid transparent;border-bottom:4px solid transparent;border-right:4px solid #8a8a8a"></div>
<div class="a" style="left:31px;top:639px;width:170px;height:15px;border:1px solid #8e8f8f;border-radius:2px;background:linear-gradient(#f3f3f3,#e6e6e6 45%,#d4d4d4 55%,#cfcfcf)"></div>
<div class="a" style="left:112px;top:643px;width:1px;height:7px;background:#555;box-shadow:2px 0 0 #555,4px 0 0 #555,1px 0 0 #fff,3px 0 0 #fff,5px 0 0 #fff"></div>
<div class="a" style="left:857px;top:642px;width:0;height:0;border-top:4px solid transparent;border-bottom:4px solid transparent;border-left:4px solid #8a8a8a"></div>

<!-- properties panel -->
<div class="a" style="left:897px;top:145px;width:399px;height:492px;background:#e8ebf9;border-left:1px solid #a9acb4;border-bottom:1px solid #a9acb4"></div>
<div class="a" style="left:898px;top:145px;width:398px;height:18px;background:linear-gradient(#c3d1e5,#d7e1ef 60%,#e3e9f4)"></div>
<div class="t" style="left:900px;top:149px;font-size:11.6px;color:#1b1b1b">Properties (Ctrl-P)</div>
<div class="dd" style="left:1268px;top:152px;border-left-width:5px;border-right-width:5px;border-top-width:5px;border-top-color:#111"></div>
<svg class="a" style="left:1282px;top:148px" width="10" height="13" viewBox="0 0 10 13">
 <path d="M2.5,1 H7.5 V7 H2.5Z" fill="none" stroke="#111" stroke-width="1.2"/>
 <rect x="5.2" y="1" width="1.6" height="6" fill="#111"/>
 <rect x="0.5" y="7" width="9" height="1.5" fill="#111"/>
 <rect x="4.3" y="8" width="1.4" height="4.5" fill="#111"/>
</svg>
<div class="a" style="left:904px;top:163px;width:385px;height:468px;border:1px solid #d9dbe3"></div>
<div class="t" style="left:912px;top:169px;font-size:12px;color:#111"><b>Component</b>: Averager.1</div>
<!-- category buttons -->
<div class="a" style="left:910px;top:186px;width:24px;height:23px;border:1px solid #3a73a6;border-radius:3px;background:linear-gradient(#eef6fc,#d5e8f6);box-shadow:inset 0 0 0 1px #b9dbf3"></div>
<svg class="a" style="left:913px;top:189px" width="18" height="17" viewBox="0 0 18 17">
 <rect x="1" y="1.5" width="5" height="5" fill="#fff" stroke="#3b6fa8" stroke-width="0.9"/>
 <rect x="2.5" y="3" width="2" height="2" fill="#222"/>
 <rect x="1" y="9.5" width="5" height="5" fill="#fff" stroke="#3b6fa8" stroke-width="0.9"/>
 <rect x="2.5" y="11" width="2" height="2" fill="#222"/>
 <path d="M8,3 H16 M8,5.5 H16 M8,11 H16 M8,13.5 H16" stroke="#6a6a6a" stroke-width="1" stroke-dasharray="1.5 0.8"/>
</svg>
<div class="a" style="left:934px;top:186px;width:24px;height:23px;border:1px solid #9d9d9d;border-radius:3px;background:linear-gradient(#fbfbfb,#ececec)"></div>
<svg class="a" style="left:937px;top:188px" width="18" height="19" viewBox="0 0 18 19">
 <text x="5" y="8.5" font-size="8.5" font-weight="bold" text-anchor="middle" fill="#3a62c8" font-family="Liberation Sans">A</text>
 <text x="5" y="17" font-size="9" font-weight="bold" text-anchor="middle" fill="#c03a3a" font-family="Liberation Sans">Z</text>
 <path d="M13,2 V15" stroke="#111" stroke-width="1.4"/>
 <path d="M10.2,12.5 L13,16.5 L15.8,12.5Z" fill="#111"/>
</svg>
<div class="a" style="left:965px;top:188px;width:315px;height:20px;background:#fff;border:1px solid #a4a8b0;border-top-color:#7d8087;border-radius:1px"></div>
<div class="t" style="left:968px;top:192px;font-size:12px;color:#6d6d6d">Search</div>
<!-- category Internal Properties -->
<div class="a" style="left:911px;top:214.5px;width:0;height:0;border-left:6px solid transparent;border-bottom:6px solid #333"></div>
<div class="t" style="left:926px;top:214.5px;font-size:11.9px;color:#1e1e1e">Internal Properties</div>
<div class="grid" style="top:227px;height:77px;border-top:1px solid #dcdcdc;border-left:1px solid #dcdcdc">
 <div class="row" style="top:0"><div class="k">Component Name</div><div class="sep"></div><div class="v">Averager.1</div></div>
 <div class="row" style="top:19px"><div class="k">Component Type</div><div class="sep"></div><div class="v" style="color:#8c8c8c">asterics.Averager</div></div>
 <div class="row" style="top:38px"><div class="k">Component Descriptio</div><div class="sep"></div><div class="v">Linked list-based averager or accumulator</div></div>
 <div class="row" style="top:57px"><div class="k">Component Class</div><div class="sep"></div><div class="v" style="color:#9a9a9a;left:125px;top:3px">processor</div>
  <div class="a" style="left:352px;top:1px;width:20px;height:16px;border:1px solid #c9c9c9;background:linear-gradient(#f6f6f6,#e4e4e4)"></div>
  <div class="dd" style="left:357px;top:8px;border-left-width:5px;border-right-width:5px;border-top-width:5px;border-top-color:#a4a4a4"></div>
 </div>
</div>
<!-- category Properties -->
<div class="a" style="left:911px;top:308.5px;width:0;height:0;border-left:6px solid transparent;border-bottom:6px solid #333"></div>
<div class="t" style="left:927px;top:307.5px;font-size:11.8px;color:#1e1e1e">Properties</div>
<div class="grid" style="top:321px;height:39px;border-top:1px solid #dcdcdc;border-left:1px solid #dcdcdc">
 <div class="row" style="top:0"><div class="k">bufferSize</div><div class="sep"></div>
  <div class="a" style="left:122px;top:0;width:251px;height:19px;border:1px solid #6e6e6e;border-right:none;border-bottom-color:#b0b0b0;border-radius:3px 0 0 3px;background:#fff"></div>
  <div class="v" style="left:126px;top:3px">5</div>
  <div class="a" style="left:352px;top:2px;width:20px;height:7px;border:1px solid #333;border-radius:3px;background:linear-gradient(#fafafa,#d9d9d9)"></div>
  <div class="a" style="left:352px;top:10px;width:20px;height:7px;border:1px solid #333;border-radius:3px;background:linear-gradient(#fafafa,#d9d9d9)"></div>
  <div class="dd" style="left:358px;top:3.5px;border-top:none;border-bottom:4px solid #111;border-left-width:4px;border-right-width:4px"></div>
  <div class="dd" style="left:358px;top:11.5px;border-top:4px solid #111;border-left-width:4px;border-right-width:4px"></div>
 </div>
 <div class="row" style="top:19px"><div class="k">mode</div><div class="sep"></div><div class="v" style="left:125px;top:3px">average</div>
  <div class="a" style="left:352px;top:2px;width:20px;height:15px;border:1px solid #8a8a8a;background:linear-gradient(#f8f8f8,#dcdcdc)"></div>
  <div class="dd" style="left:357px;top:8px;border-left-width:5px;border-right-width:5px;border-top-width:5px;border-top-color:#111"></div>
 </div>
</div>
<!-- bottom tabs -->
<div class="a" style="left:1023px;top:638px;width:88px;height:20px;border:1px solid #9c9c9c;border-top:none;background:linear-gradient(#f2f2f2,#dedede)"></div>
<div class="a" style="left:1110px;top:638px;width:98px;height:20px;border:1px solid #9c9c9c;border-top:none;background:linear-gradient(#f2f2f2,#dedede)"></div>
<div class="a" style="left:897px;top:637px;width:126px;height:24px;border:1px solid #9c9c9c;border-top:none;background:#fff"></div>
<svg class="a" style="left:0;top:0" width="1304" height="699" viewBox="0 0 1304 699">
 
 <g transform="translate(909,643)">
  <rect x="0.5" y="3.5" width="8" height="6.5" fill="#dfe6f0" stroke="#8c96a6" stroke-width="0.8"/>
  <rect x="0.5" y="3.5" width="8" height="2" fill="#9fb3d0"/>
  <path d="M2,7.5 H7 M2,9 H7" stroke="#9aa4b4" stroke-width="0.6"/>
  <path d="M3.5,4 L5.5,1 L9,1.5 L8,4.5Z" fill="#e6bd32" stroke="#a07a18" stroke-width="0.5"/>
  <circle cx="9" cy="1.5" r="1.2" fill="#5cc05c"/>
 </g>
 <g transform="translate(1034,641)">
  <rect x="0.5" y="3.5" width="8" height="6.5" fill="#dfe6f0" stroke="#8c96a6" stroke-width="0.8"/>
  <rect x="0.5" y="3.5" width="8" height="2" fill="#9fb3d0"/>
  <path d="M2,7.5 H7 M2,9 H7" stroke="#9aa4b4" stroke-width="0.6"/>
  <path d="M3.5,4 L5.5,1 L9,1.5 L8,4.5Z" fill="#e6bd32" stroke="#a07a18" stroke-width="0.5"/>
  <circle cx="9" cy="1.5" r="1.2" fill="#5cc05c"/>
 </g>
 <g transform="translate(1121,641)">
  <rect x="0.5" y="3.5" width="8" height="6.5" fill="#dfe6f0" stroke="#8c96a6" stroke-width="0.8"/>
  <rect x="0.5" y="3.5" width="8" height="2" fill="#9fb3d0"/>
  <path d="M2,7.5 H7 M2,9 H7" stroke="#9aa4b4" stroke-width="0.6"/>
  <path d="M3.5,4 L5.5,1 L9,1.5 L8,4.5Z" fill="#e6bd32" stroke="#a07a18" stroke-width="0.5"/>
  <circle cx="9" cy="1.5" r="1.2" fill="#5cc05c"/>
 </g>
</svg>
<div class="t" style="left:922px;top:643.5px;font-size:11.8px;color:#111">Properties (Ctrl-P)</div>
<div class="t" style="left:1046px;top:643px;font-size:11.8px;color:#111">Input Ports</div>
<div class="t" style="left:1134px;top:643px;font-size:11.8px;color:#111">Output Ports</div>

<!-- status bar -->
<div class="t" style="left:18px;top:671px;font-size:11px;color:#111">ARE Status:</div>
<div class="a" style="left:88px;top:666px;width:82px;height:20px;border:1px solid #c5cad4;background:#e8ebf9"></div>
<div class="t" style="left:91px;top:671.5px;font-size:11.8px;color:#111">Connected</div>
<div class="a" style="left:884px;top:667px;width:38px;height:19px;border:1px solid #c8ccd6;border-right-color:#e0e3ec;border-bottom-color:#dde0ea;background:#eceff9"></div>
<div class="t" style="left:887px;top:673px;font-size:11.2px;color:#111">100%</div>
<!-- slider -->
<div class="a" style="left:934px;top:670px;width:145px;height:3px;border:1px solid #d2d2d2;border-radius:1px;background:#e7e7e7"></div>
<svg class="a" style="left:930px;top:662px" width="155" height="26" viewBox="930 662 155 26">
 <path d="M934.5,682 V685 M942.5,682 V685 M950.5,682 V685 M958.5,682 V685 M966.5,682 V685 M974.5,682 V685 M982.5,682 V685 M990.5,682 V685 M998.5,682 V685 M1006.5,682 V685 M1014.5,682 V685 M1022.5,682 V685 M1030.5,682 V685 M1038.5,682 V685 M1046.5,682 V685 M1054.5,682 V685 M1062.5,682 V685 M1070.5,682 V685 M1078.5,682 V685" stroke="#a9a9a9" stroke-width="1"/>
 <path d="M993.5,665.5 Q993.5,664.5 994.5,664.5 H1001.5 Q1002.5,664.5 1002.5,665.5 V678 L998,682.5 L993.5,678Z" fill="#f2f2f2" stroke="#8d8d8d"/>
</svg>
<div class="t" style="left:1091px;top:671px;font-size:11px;color:#111">Ctrl +/-</div>

</body></html>
